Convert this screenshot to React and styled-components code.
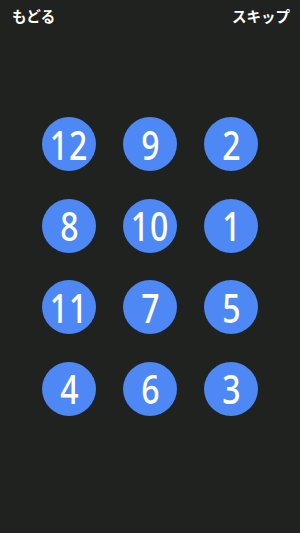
import React from "react";
import styled, { createGlobalStyle } from "styled-components";

const Global = createGlobalStyle`
  html, body { margin: 0; padding: 0; background: #202220; }
  body { font-family: "Noto Sans CJK JP", "Noto Sans", sans-serif; }
`;

const Screen = styled.div`
  width: 300px;
  height: 533px;
  background: #202220;
  display: flex;
  flex-direction: column;
  overflow: hidden;
`;

const Header = styled.div`
  display: flex;
  justify-content: space-between;
  align-items: center;
  height: 34px;
  padding: 0 10px 0 12px;
`;

const HeaderButton = styled.span`
  color: #ffffff;
  font-family: "Noto Sans CJK JP", sans-serif;
  font-weight: 700;
  font-size: 14.5px;
  line-height: 1;
  margin-top: -1px;
`;

const Grid = styled.div`
  display: grid;
  grid-template-columns: repeat(3, 54px);
  grid-auto-rows: 54px;
  column-gap: 27px;
  row-gap: 27.5px;
  justify-content: center;
  margin-top: 83px;
`;

const Bubble = styled.button`
  width: 54px;
  height: 54px;
  border-radius: 50%;
  border: none;
  padding: 0;
  background: #4d88f4;
  color: #ffffff;
  display: flex;
  align-items: center;
  justify-content: center;
`;

const Digits = styled.span`
  display: inline-block;
  font-family: "Noto Sans", sans-serif;
  font-weight: 500;
  font-size: 40px;
  line-height: 1;
  letter-spacing: ${(p) => (p.$wide ? "1px" : "0")};
  transform: scaleX(0.8);
  padding-top: 1px;
`;

const numbers = [12, 9, 2, 8, 10, 1, 11, 7, 5, 4, 6, 3];

export default function App() {
  return (
    <Screen>
      <Global />
      <Header>
        <HeaderButton>もどる</HeaderButton>
        <HeaderButton>スキップ</HeaderButton>
      </Header>
      <Grid>
        {numbers.map((n) => (
          <Bubble key={n}>
            <Digits $wide={n >= 10}>{n}</Digits>
          </Bubble>
        ))}
      </Grid>
    </Screen>
  );
}
